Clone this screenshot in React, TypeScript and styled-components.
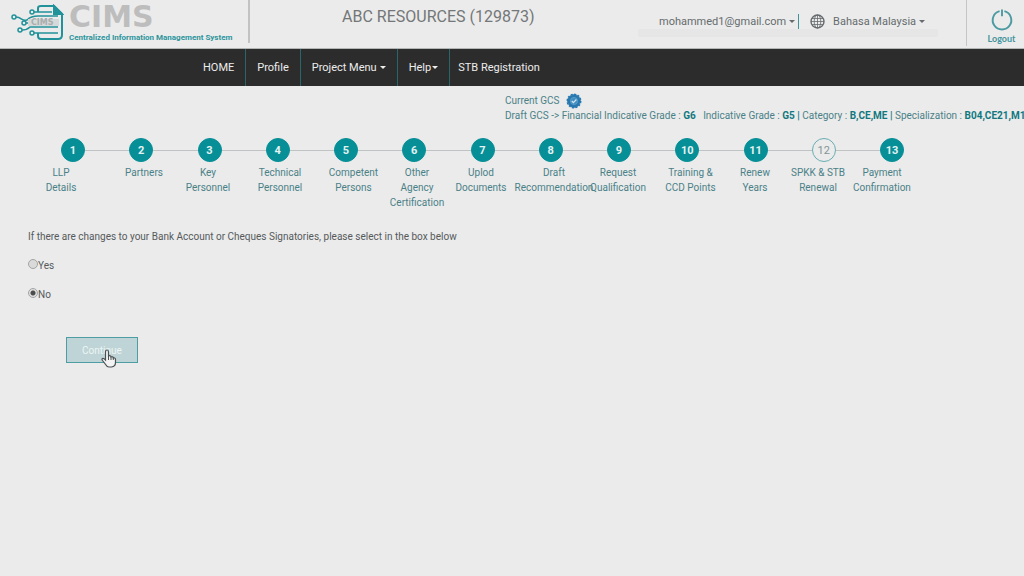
import React, { useState } from 'react';
import styled, { createGlobalStyle, css } from 'styled-components';

const teal = '#078f97';
const tealText = '#4a8187';
const ink = '#555a5c';

const GlobalStyle = createGlobalStyle`
  * { box-sizing: border-box; }
  body {
    margin: 0;
    background: #ebebeb;
    color: ${ink};
    font-family: Roboto, "Liberation Sans", sans-serif;
    font-size: 10px;
    line-height: 15px;
    overflow-x: hidden;
  }
  button, input { font: inherit; color: inherit; }
  a { color: inherit; text-decoration: none; }
`;

const Page = styled.div`
  min-height: 100vh;
  overflow: hidden;
`;

const Header = styled.header`
  display: flex;
  height: 49px;
  border-bottom: 1px solid #b4b6b6;
  font-size: 11px;
`;

const Brand = styled.a`
  display: flex;
  width: 250px;
  height: 43px;
  padding: 4px 0 0 11px;
  gap: 5px;
  border-right: 2px solid #c2c2c2;
`;

const BrandText = styled.div`
  display: flex;
  flex-direction: column;
  white-space: nowrap;
`;

const Wordmark = styled.span`
  font: bold 30px/26px "DejaVu Sans", sans-serif;
  color: #bdbdbd;
`;

const Tagline = styled.span`
  font-size: 8px;
  line-height: 15px;
  font-weight: 700;
  color: #2b959c;
`;

const Company = styled.h1`
  flex: 1;
  margin: 0;
  padding: 7px 0 0 92px;
  font-size: 16px;
  line-height: 20px;
  font-weight: 400;
  color: #747778;
  white-space: nowrap;
`;

const Account = styled.div`
  display: flex;
  flex-direction: column;
  width: 300px;
  margin-right: 28px;
  padding-top: 14px;
`;

const AccountRow = styled.div`
  display: flex;
  align-items: center;
  height: 15px;
  padding-left: 21px;
`;

const AccountShade = styled.div`
  height: 8px;
  border-radius: 2px;
  background: #e6e6e6;
`;

const MenuButton = styled.button`
  display: flex;
  align-items: center;
  gap: 3px;
  padding: 0;
  border: 0;
  background: none;
  color: #666b6d;
  white-space: nowrap;
`;

const Separator = styled.span`
  width: 1px;
  height: 15px;
  margin: 0 11px 0 3px;
  background: #3f959b;
`;

const GlobeSlot = styled.span`
  display: flex;
  margin-right: 8px;
`;

const Caret = styled.span`
  border: 3px solid transparent;
  border-top-color: currentColor;
  border-bottom: 0;
`;

const Logout = styled.button`
  display: flex;
  flex-direction: column;
  align-items: center;
  width: 58px;
  height: 46px;
  padding: 8px 0 0 12px;
  border: 0;
  border-left: 1px solid #c6c6c6;
  background: none;
  color: #43949c;
  font: bold 9px/14px Lato, sans-serif;
`;

const Nav = styled.nav`
  display: flex;
  height: 37px;
  padding-left: 192px;
  background: #2c2c2c;
  color: #ededed;
  font-size: 11px;
`;

const NavItem = styled.a<{ $tight?: boolean; $last?: boolean }>`
  display: flex;
  align-items: center;
  gap: ${(p) => (p.$tight ? 1 : 3)}px;
  padding: 0 11px;
  white-space: nowrap;
  ${(p) =>
    p.$last
      ? css`padding-left: 8px;`
      : css`border-right: 1px solid #28666b;`}
`;

const Grades = styled.section`
  padding: 7px 0 0 505px;
  color: ${tealText};
  white-space: nowrap;
  b { color: #127880; }
`;

const GradeLine = styled.div`
  display: flex;
  align-items: center;
  gap: 4px;
  height: 15px;
  white-space: pre;
`;

const Steps = styled.section`
  padding: 15px 120px 0 0;
`;

const Track = styled.ol`
  display: flex;
  margin: 0;
  padding: 0 0 0 61px;
  list-style: none;
`;

const Stop = styled.li<{ $current: boolean }>`
  display: flex;
  align-items: center;
  &:not(:first-child) { flex: 1; }
  &:not(:first-child)::before {
    content: '';
    flex: 1;
    height: 1px;
    background: #bfc3c3;
  }
  a {
    display: flex;
    align-items: center;
    justify-content: center;
    width: 24px;
    height: 24px;
    border: 1px solid ${(p) => (p.$current ? '#68adb3' : teal)};
    border-radius: 50%;
    background: ${(p) => (p.$current ? 'transparent' : teal)};
    color: ${(p) => (p.$current ? '#839496' : '#e4f3f3')};
    font-size: 11px;
    font-weight: ${(p) => (p.$current ? 400 : 700)};
  }
`;

const Labels = styled.div`
  display: grid;
  grid-template-columns: 110fr 56fr 72fr 72fr 75fr 52fr 76fr 70fr 58fr 87fr 42fr 84fr 44fr;
  margin: 3px 0 0 6px;
`;

const Label = styled.a`
  display: flex;
  flex-direction: column;
  align-items: center;
  min-width: 0;
  color: ${tealText};
  white-space: nowrap;
`;

const Form = styled.form`
  padding: 19px 28px;
`;

const Choices = styled.fieldset`
  margin: 0;
  padding: 0;
  border: 0;
  legend { padding: 0; }
`;

const Choice = styled.label`
  display: flex;
  width: max-content;
  margin-top: 14px;
`;

const Radio = styled.input`
  appearance: none;
  width: 10px;
  height: 10px;
  margin: 1px 0 0;
  border: 1px solid #a2a4a4;
  border-radius: 50%;
  background: #dadada;
  &:checked { background: radial-gradient(circle, #4c4c4c 2px, #dedede 3px); }
`;

const Actions = styled.div`
  display: flex;
  margin: 35px 0 0 38px;
`;

const Continue = styled.button`
  position: relative;
  width: 72px;
  height: 26px;
  padding: 0;
  border: 1px solid #4d9da3;
  background: #bfd4d6;
  color: #edf5f5;
`;

const Pointer = styled.svg`
  position: absolute;
  left: 34px;
  top: 11px;
`;

const Logo = () => (
  <svg width="53" height="37" viewBox="0 0 53 37" fill="none" stroke="#22929a" strokeWidth="2" aria-hidden="true">
    <path d="M27 8V4q0-2 3-2h13l8 8v21q0 4-4 4H30q-3 0-3-3v-3" />
    <path d="M43 2v8h8z" fill="#22929a" />
    <path d="M5 13c6 0 6 5 11 3q4-4 11-4h20M15 19h33M11 26q5 0 8-3h28M22 29h25M22 8h19" strokeWidth="1.5" />
    <g fill="#ebebeb" strokeWidth="1.5">
      <circle cx="3" cy="13" r="2" />
      <circle cx="21" cy="8" r="2" />
      <circle cx="13" cy="19" r="2" />
      <circle cx="9" cy="26" r="2" />
      <circle cx="21" cy="29" r="2" />
    </g>
    <rect x="17" y="15" width="31" height="7" fill="#d4dada" stroke="none" />
    <text x="20" y="21" fill="#a9adad" stroke="none" fontFamily="DejaVu Sans" fontSize="8" fontWeight="700">CIMS</text>
  </svg>
);

const Globe = () => (
  <svg width="15" height="15" viewBox="0 0 15 15" fill="none" stroke="#666b6e" aria-hidden="true">
    <circle cx="7.5" cy="7.5" r="6.5" strokeWidth="1.4" />
    <ellipse cx="7.5" cy="7.5" rx="3.3" ry="6.5" strokeWidth=".8" />
    <path d="M7.5 1v13M1 7.5h13M2 4.5h11M2 10.5h11" strokeWidth=".8" />
  </svg>
);

const Power = () => (
  <svg width="24" height="25" viewBox="0 0 24 25" fill="none" stroke="#4c9aa2" strokeWidth="2" aria-hidden="true">
    <path d="M9.500 3.300a9.700 9.700 0 1 0 5 0M12 1.500v7" />
  </svg>
);

const Seal = () => (
  <svg width="16" height="16" viewBox="0 0 16 16" aria-hidden="true">
    <circle cx="8" cy="8" r="6.3" fill="#2878b0" stroke="#2878b0" />
    <circle cx="8" cy="8" r="6.8" fill="none" stroke="#2878b0" strokeWidth="1.4" strokeDasharray="2 1.56" />
    <circle cx="8" cy="8" r="3.6" fill="#408dc0" stroke="#63a5cd" strokeWidth=".7" />
    <path d="M5.8 8l1.6 1.7 3-3.2" fill="none" stroke="#d2e6f0" strokeWidth="1.2" />
  </svg>
);

const steps = [
  ['LLP', 'Details'],
  ['Partners'],
  ['Key', 'Personnel'],
  ['Technical', 'Personnel'],
  ['Competent', 'Persons'],
  ['Other', 'Agency', 'Certification'],
  ['Uplod', 'Documents'],
  ['Draft', 'Recommendation'],
  ['Request', 'Qualification'],
  ['Training &', 'CCD Points'],
  ['Renew', 'Years'],
  ['SPKK & STB', 'Renewal'],
  ['Payment', 'Confirmation'],
];

export default function App() {
  const [changed, setChanged] = useState('No');
  return (
    <Page>
      <GlobalStyle />
      <Header>
        <Brand href="#">
          <Logo />
          <BrandText>
            <Wordmark>CIMS</Wordmark>
            <Tagline>Centralized Information Management System</Tagline>
          </BrandText>
        </Brand>
        <Company>ABC RESOURCES (129873)</Company>
        <Account>
          <AccountRow>
            <MenuButton type="button">mohammed1@gmail.com <Caret /></MenuButton>
            <Separator />
            <GlobeSlot><Globe /></GlobeSlot>
            <MenuButton type="button">Bahasa Malaysia <Caret /></MenuButton>
          </AccountRow>
          <AccountShade />
        </Account>
        <Logout type="button"><Power />Logout</Logout>
      </Header>
      <Nav>
        <NavItem href="#">HOME</NavItem>
        <NavItem href="#">Profile</NavItem>
        <NavItem href="#">Project Menu <Caret /></NavItem>
        <NavItem href="#" $tight>Help<Caret /></NavItem>
        <NavItem href="#" $last>STB Registration</NavItem>
      </Nav>
      <Grades>
        <GradeLine>Current GCS <Seal /></GradeLine>
        <div>
          Draft GCS -&gt; Financial Indicative Grade : <b>G6</b>&nbsp;&nbsp; Indicative Grade : <b>G5 |</b> Category : <b>B,CE,ME |</b> Specialization : <b>B04,CE21,M15</b>
        </div>
      </Grades>
      <Steps>
        <Track>
          {steps.map((_, i) => (
            <Stop key={i} $current={i === 11}><a href="#">{i + 1}</a></Stop>
          ))}
        </Track>
        <Labels>
          {steps.map((lines, i) => (
            <Label href="#" key={i}>
              {lines.map((line) => <span key={line}>{line}</span>)}
            </Label>
          ))}
        </Labels>
      </Steps>
      <Form onSubmit={(e) => e.preventDefault()}>
        <Choices>
          <legend>If there are changes to your Bank Account or Cheques Signatories, please select in the box below</legend>
          {['Yes', 'No'].map((value) => (
            <Choice key={value}>
              <Radio type="radio" name="changed" value={value} checked={changed === value} onChange={() => setChanged(value)} />
              {value}
            </Choice>
          ))}
        </Choices>
        <Actions>
          <Continue type="submit">
            Continue
            <Pointer width="16" height="19" viewBox="0 0 16 19" aria-hidden="true">
              <path d="M4.5 11V3q0-2 1.500-2t1.500 2v4q2-1 2.500 1 2-.8 2.300 1 2.200-.5 2.200 1.500v3q0 4-4 4.500H8q-2 0-3-2l-3.500-4.500q-1-1.500 0-2 1-.5 3 1.500z" fill="#f3f3f3" stroke="#4b5052" strokeWidth="1.200" />
              <path d="M7.500 7v4M10 8v3M12.300 9v2" stroke="#4b5052" fill="none" />
            </Pointer>
          </Continue>
        </Actions>
      </Form>
    </Page>
  );
}
